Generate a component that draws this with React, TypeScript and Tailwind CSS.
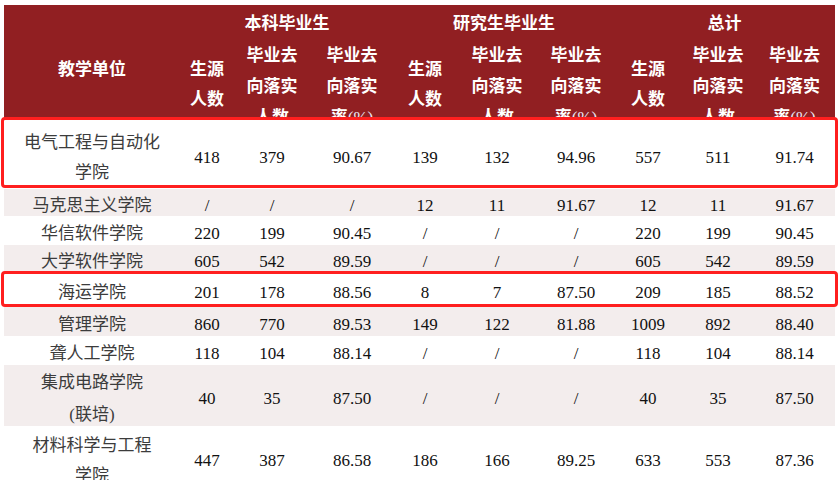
import React from 'react'

const grid = 'grid grid-cols-[176px_54px_76px_84px_62px_82px_76px_68px_72px_81px]'
const font = { fontFamily: '"Liberation Serif", "Noto Sans CJK SC", serif' }
const headFont = { fontFamily: '"Noto Sans CJK SC", "Noto Sans", sans-serif' }

type Row = { name: string[]; vals: string[]; h: string; shade: boolean; lead?: string }

const rows: Row[] = [
  { name: ['电气工程与自动化', '学院'], vals: ['418', '379', '90.67', '139', '132', '94.96', '557', '511', '91.74'], h: 'h-[69px]', shade: false },
  { name: ['马克思主义学院'], vals: ['/', '/', '/', '12', '11', '91.67', '12', '11', '91.67'], h: 'h-[27px]', shade: true },
  { name: ['华信软件学院'], vals: ['220', '199', '90.45', '/', '/', '/', '220', '199', '90.45'], h: 'h-[29px]', shade: false },
  { name: ['大学软件学院'], vals: ['605', '542', '89.59', '/', '/', '/', '605', '542', '89.59'], h: 'h-[27px]', shade: true },
  { name: ['海运学院'], vals: ['201', '178', '88.56', '8', '7', '87.50', '209', '185', '88.52'], h: 'h-[35px]', shade: false },
  { name: ['管理学院'], vals: ['860', '770', '89.53', '149', '122', '81.88', '1009', '892', '88.40'], h: 'h-[29px]', shade: true },
  { name: ['聋人工学院'], vals: ['118', '104', '88.14', '/', '/', '/', '118', '104', '88.14'], h: 'h-[29px]', shade: false },
  { name: ['集成电路学院', '(联培)'], vals: ['40', '35', '87.50', '/', '/', '/', '40', '35', '87.50'], h: 'h-[61px]', shade: true, lead: 'leading-[32px]' },
  { name: ['材料科学与工程', '学院'], vals: ['447', '387', '86.58', '186', '166', '89.25', '633', '553', '87.36'], h: 'h-[62px]', shade: false },
]

function SubHead({ lines }: { lines: React.ReactNode[] }) {
  return (
    <div className="flex flex-col items-center leading-[31px]">
      {lines.map((l, i) => (
        <span key={i}>{l}</span>
      ))}
    </div>
  )
}

const rate = (
  <>
    率<span className="font-normal text-[#ece6f4]" style={{ fontFamily: '"Liberation Serif", serif' }}>(%)</span>
  </>
)

function GroupCols() {
  return (
    <>
      <div className="flex justify-center pt-[15px] leading-[30px]">
        <div className="flex flex-col items-center">
          <span>生源</span>
          <span>人数</span>
        </div>
      </div>
      <SubHead lines={['毕业去', '向落实', '人数']} />
      <SubHead lines={['毕业去', '向落实', rate]} />
    </>
  )
}

export default function App() {
  return (
    <div className="relative w-[839px] h-[480px] overflow-hidden bg-white pl-[4px] pt-[5px]">
      <div className="w-[831px]">
        {/* Header */}
        <div
          className={`${grid} grid-rows-[33px_82px] h-[115px] overflow-hidden bg-[#911f22] text-white text-[17px] font-bold`}
          style={headFont}
        >
          <div className="row-span-2 flex justify-center pt-[48px] leading-[30px]">教学单位</div>
          <div className="col-span-3 flex items-center justify-center">本科毕业生</div>
          <div className="col-span-3 flex items-center justify-center">研究生毕业生</div>
          <div className="col-span-3 flex items-center justify-center">总计</div>
          <GroupCols />
          <GroupCols />
          <GroupCols />
        </div>

        {/* Body */}
        <div className="text-[17px]" style={font}>
          {rows.map((r, i) => (
            <div
              key={i}
              className={`${grid} grid-rows-[minmax(0,1fr)] ${r.h} ${r.shade ? 'bg-[#f3eded]' : 'bg-white'}`}
            >
              <div className={`flex min-h-0 flex-col items-center justify-center pt-[7px] text-[#3c3c3c] ${r.lead ?? 'leading-[30px]'}`}>
                {r.name.map((n, j) => (
                  <span key={j}>{n}</span>
                ))}
              </div>
              {r.vals.map((v, j) => (
                <div key={j} className="flex min-h-0 items-center justify-center pt-[7px] text-[#111] leading-[30px]">
                  {v}
                </div>
              ))}
            </div>
          ))}
        </div>
      </div>

      {/* Highlight annotations */}
      <div className="absolute left-[1px] top-[117px] w-[837px] h-[71px] border-[3px] border-[#ff1f1f] rounded-[4px]" />
      <div className="absolute left-[1px] top-[271px] w-[837px] h-[36px] border-[3px] border-[#ff1f1f] rounded-[4px]" />
    </div>
  )
}
